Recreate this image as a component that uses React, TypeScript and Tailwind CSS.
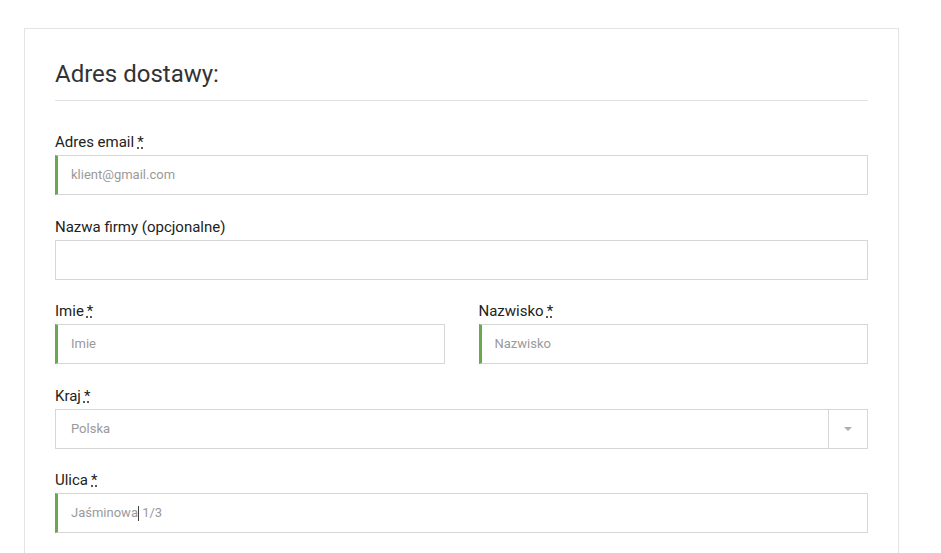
import React from 'react';

function Req() {
  return (
    <abbr
      title="wymagane"
      className="ml-[3px] cursor-help text-[#222] no-underline [text-decoration:underline_dotted]"
    >
      *
    </abbr>
  );
}

function Label({ children, required }: { children: React.ReactNode; required?: boolean }) {
  return (
    <label className="mb-[3px] block h-5 text-[15px] leading-5 text-[#222]">
      {children}
      {required && <Req />}
    </label>
  );
}

function Field({
  label,
  required,
  placeholder,
  accent,
}: {
  label: string;
  required?: boolean;
  placeholder?: string;
  accent?: boolean;
}) {
  return (
    <div className="mb-[21.5px]">
      <Label required={required}>{label}</Label>
      <div
        className={`flex h-10 items-center border border-[#d6d6d6] pr-3 text-[13px] text-[#9a9a9a] ${
          accent ? 'border-l-[3px] border-l-[#6aa84f] pl-[13px]' : 'pl-[15px]'
        }`}
      >
        {placeholder}
      </div>
    </div>
  );
}

export default function App() {
  return (
    <div className="h-[553px] overflow-hidden bg-white pl-6 pr-[42px] pt-7 font-['Roboto','Liberation_Sans',sans-serif]">
      <div className="border border-[#e4e4e4] px-[30px] pt-[30px] pb-10">
        {/* Title */}
        <h2 className="mb-[31px] border-b border-[#e2e2e2] pb-[11px] text-[24px] leading-[30px] text-[#333]">
          Adres dostawy:
        </h2>

        <Field label="Adres email" required placeholder="klient@gmail.com" accent />
        <Field label="Nazwa firmy (opcjonalne)" />

        <div className="grid grid-cols-2 gap-x-[34px]">
          <Field label="Imie" required placeholder="Imie" accent />
          <Field label="Nazwisko" required placeholder="Nazwisko" accent />
        </div>

        {/* Country select */}
        <div className="mb-[21.5px]">
          <Label required>Kraj</Label>
          <div className="flex h-10 border border-[#d6d6d6] text-[13px] text-[#9a9a9a]">
            <div className="flex flex-1 items-center pl-[15px]">Polska</div>
            <div className="flex w-[39px] items-center justify-center border-l border-[#d6d6d6]">
              <span className="h-0 w-0 border-x-[4px] border-t-[4px] border-x-transparent border-t-[#b0b0b0]" />
            </div>
          </div>
        </div>

        {/* Street */}
        <div className="mb-5">
          <Label required>Ulica</Label>
          <div className="flex h-10 items-center whitespace-pre border border-[#d6d6d6] border-l-[3px] border-l-[#6aa84f] pl-[13px] text-[13px] text-[#9a9a9a]">
            <span>Jaśminowa</span>
            <span className="inline-block h-[15px] w-px bg-[#444]" />
            <span> 1/3</span>
          </div>
        </div>
      </div>
    </div>
  );
}
